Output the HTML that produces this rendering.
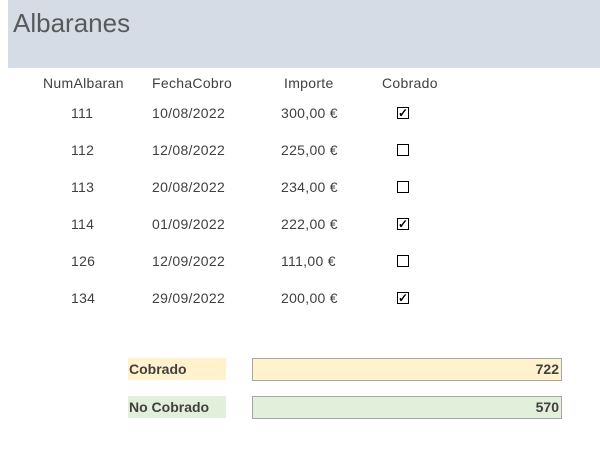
<!DOCTYPE html>
<html><head><style>
body{margin:0;width:600px;height:466px;background:#fff;font-family:"Liberation Sans",sans-serif;color:#404040;position:relative;overflow:hidden}
.hdr{position:absolute;left:8px;top:0;width:592px;height:68px;background:#d6dce5}
.t{position:absolute;left:13px;top:8px;font-size:26px;color:#595959}
.c{position:absolute;font-size:14px;white-space:nowrap;letter-spacing:0.3px}
.cb{position:absolute;width:10px;height:10px;border:1px solid #000;background:#fff;font-size:12px;line-height:10px;text-align:center;color:#000;font-weight:bold}
.box{position:absolute;font-size:14px;font-weight:bold;color:#404040;box-sizing:border-box}
</style></head><body>
<div class="hdr"></div><div class="t">Albaranes</div>
<div class="c" style="left:43px;top:75px">NumAlbaran</div>
<div class="c" style="left:152px;top:75px">FechaCobro</div>
<div class="c" style="left:284px;top:75px">Importe</div>
<div class="c" style="left:382px;top:75px">Cobrado</div>

<div class="c" style="left:71px;top:105px">111</div><div class="c" style="left:152px;top:105px">10/08/2022</div><div class="c" style="left:281px;top:105px">300,00 €</div><div class="cb" style="left:397px;top:107px">✓</div>
<div class="c" style="left:71px;top:142px">112</div><div class="c" style="left:152px;top:142px">12/08/2022</div><div class="c" style="left:281px;top:142px">225,00 €</div><div class="cb" style="left:397px;top:144px"></div>
<div class="c" style="left:71px;top:179px">113</div><div class="c" style="left:152px;top:179px">20/08/2022</div><div class="c" style="left:281px;top:179px">234,00 €</div><div class="cb" style="left:397px;top:181px"></div>
<div class="c" style="left:71px;top:216px">114</div><div class="c" style="left:152px;top:216px">01/09/2022</div><div class="c" style="left:281px;top:216px">222,00 €</div><div class="cb" style="left:397px;top:218px">✓</div>
<div class="c" style="left:71px;top:253px">126</div><div class="c" style="left:152px;top:253px">12/09/2022</div><div class="c" style="left:281px;top:253px">111,00 €</div><div class="cb" style="left:397px;top:255px"></div>
<div class="c" style="left:71px;top:290px">134</div><div class="c" style="left:152px;top:290px">29/09/2022</div><div class="c" style="left:281px;top:290px">200,00 €</div><div class="cb" style="left:397px;top:292px">✓</div>

<div class="box" style="left:128px;top:358px;width:98px;height:22px;background:#fff2cc;padding:3px 0 0 1px">Cobrado</div>
<div class="box" style="left:252px;top:358px;width:310px;height:23px;background:#fff2cc;border:1px solid #a6a6a6;text-align:right;padding:2px 2px 0 0">722</div>
<div class="box" style="left:128px;top:396px;width:98px;height:22px;background:#e2efda;padding:3px 0 0 1px">No Cobrado</div>
<div class="box" style="left:252px;top:396px;width:310px;height:23px;background:#e2efda;border:1px solid #a6a6a6;text-align:right;padding:2px 2px 0 0">570</div>
</body></html>
